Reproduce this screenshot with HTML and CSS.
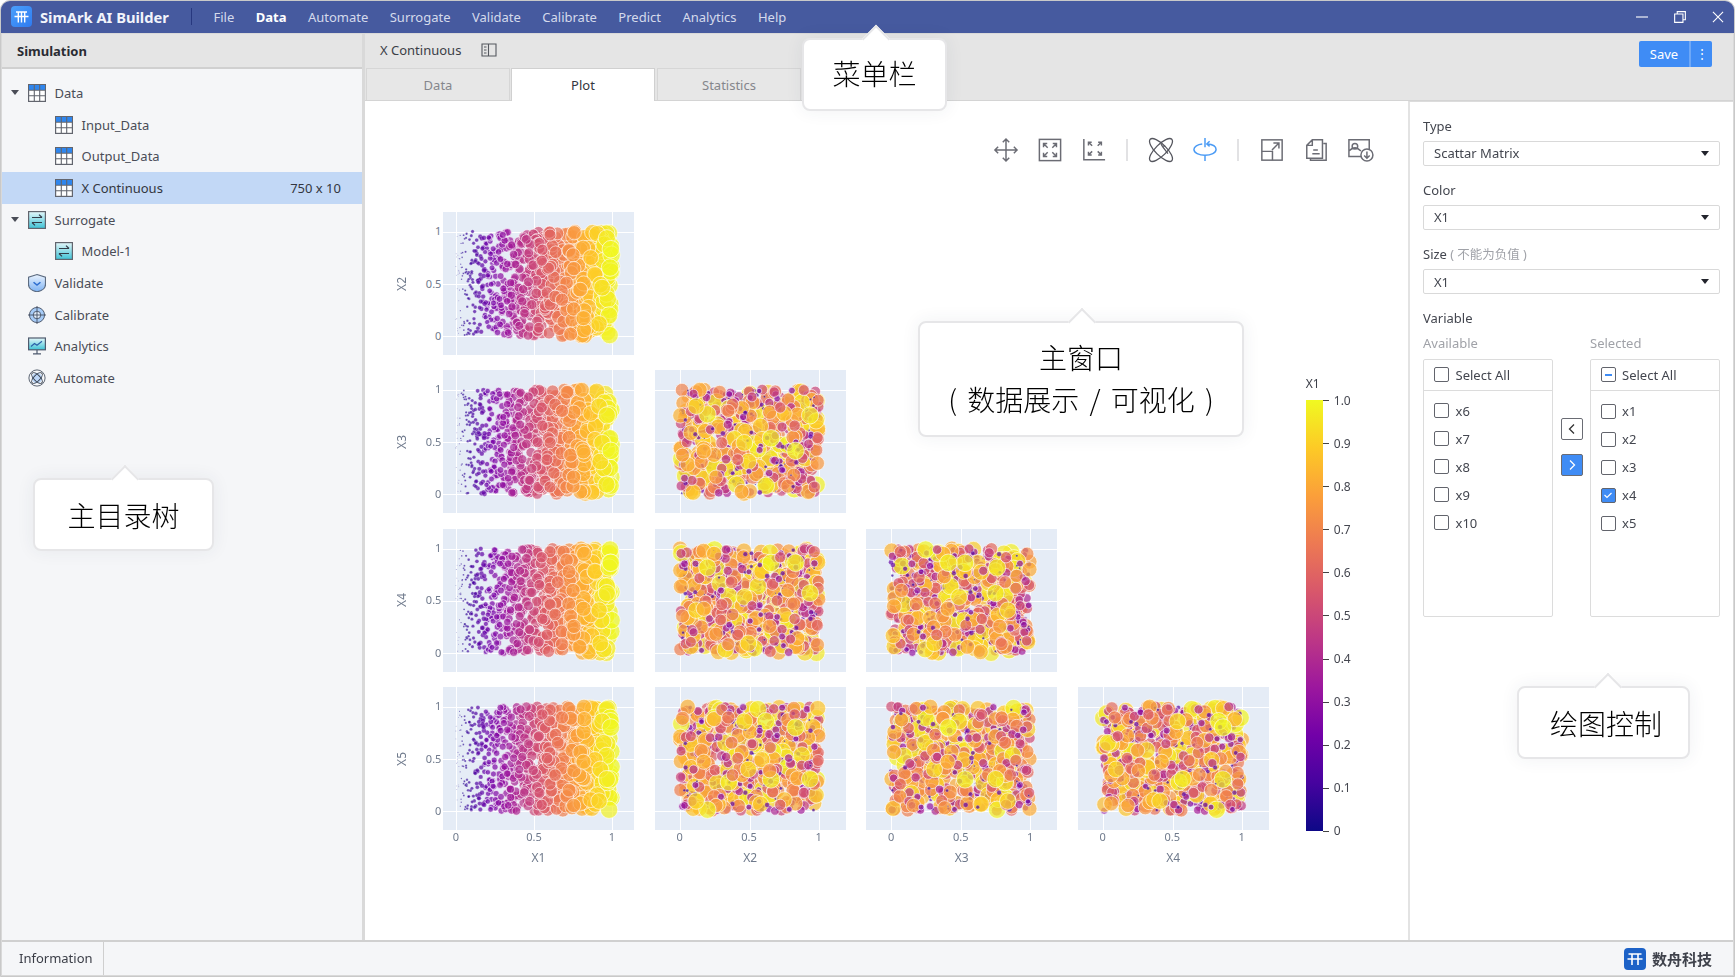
FILE: index.html
```html
<!DOCTYPE html>
<html lang="zh-CN">
<head>
<meta charset="utf-8">
<title>SimArk AI Builder</title>
<link rel="stylesheet" href="styles.css">
</head>
<body>
<svg class="defs" aria-hidden="true">
  <defs>
    <linearGradient id="g-teal" x1="0" y1="0" x2="0" y2="1"><stop offset="0" stop-color="#e4f7fa"/><stop offset="1" stop-color="#3fc3d6"/></linearGradient>
    <linearGradient id="g-blue" x1="0" y1="0" x2="0" y2="1"><stop offset="0" stop-color="#eaf3fe"/><stop offset="1" stop-color="#7db2f3"/></linearGradient>
    <linearGradient id="g-logo" x1="0" y1="0" x2="1" y2="1"><stop offset="0" stop-color="#4aa0fb"/><stop offset="1" stop-color="#2f7bf0"/></linearGradient>
  </defs>
  <symbol id="i-table" viewBox="0 0 18 18">
    <rect x=".6" y=".6" width="16.8" height="16.8" fill="#fff" stroke="#62656e" stroke-width="1.2"/>
    <rect x="1" y="1" width="16" height="5" fill="#2f86ee"/>
    <path d="M6.3 1v16M11.7 1v16M1 6.3h16M1 11.700h16" stroke="#62656e" stroke-width="1.1" fill="none"/>
  </symbol>
  <symbol id="i-surrogate" viewBox="0 0 18 18">
    <rect x=".6" y=".6" width="16.8" height="16.8" fill="url(#g-teal)" stroke="#62656e" stroke-width="1.2"/>
    <path d="M4 6.500h10M11 3.600l3 2.900M14 11.500H4M7 14.400l-3-2.900" stroke="#333b48" stroke-width="1.2" fill="none"/>
  </symbol>
  <symbol id="i-shield" viewBox="1.200 .2 15.600 18" preserveAspectRatio="none">
    <path d="M9 .8l7.400 2.600v7c0 4-3.200 6.800-7.400 7.600-4.200-.8-7.400-3.600-7.400-7.600v-7z" fill="url(#g-blue)" stroke="#5c6b80" stroke-width="1.100"/>
    <path d="M6 8.500l3 2.800 3-2.800" stroke="#2f6fd0" stroke-width="1.300" fill="none"/>
  </symbol>
  <symbol id="i-target" viewBox="0 0 20 20">
    <circle cx="10" cy="10" r="8.400" fill="#a6cbf7" stroke="#4e5a6e" stroke-width="1.100"/>
    <circle cx="10" cy="10" r="4.200" fill="#e7f1fd" stroke="#4e5a6e" stroke-width="1.100"/>
    <path d="M10 0v20M0 10h20" stroke="#4e5a6e" stroke-width="1.100" fill="none"/>
  </symbol>
  <symbol id="i-chart" viewBox="0 0 18 18">
    <rect x=".6" y="1" width="16.800" height="11.800" fill="url(#g-teal)" stroke="#4e5a6e" stroke-width="1.200"/>
    <path d="M3 9.500l3.500-3 2.500 1.800 5-4" stroke="#2b5fa8" stroke-width="1.100" fill="none"/>
    <path d="M9 13v3.500M5 16.800h8" stroke="#4e5a6e" stroke-width="1.200" fill="none"/>
  </symbol>
  <symbol id="i-atom" viewBox="0 0 20 20">
    <circle cx="10" cy="10" r="9" fill="#f5f6f8" stroke="#5b6472" stroke-width="1.100"/>
    <circle cx="10" cy="10" r="5.800" fill="#bcd6f8"/>
    <ellipse cx="10" cy="10" rx="7.600" ry="3.400" transform="rotate(45 10 10)" fill="none" stroke="#3c4654" stroke-width="1.100"/>
    <ellipse cx="10" cy="10" rx="7.600" ry="3.400" transform="rotate(-45 10 10)" fill="none" stroke="#3c4654" stroke-width="1.100"/>
  </symbol>
</svg>

<div class="window">
  <header class="titlebar">
    <svg class="app-logo" viewBox="0 0 21 21">
      <rect width="21" height="21" rx="4" fill="url(#g-logo)"/>
      <path d="M5 6h11M3.500 10.500h14M7.300 6v10.500M10.500 6v10.500M13.700 6v10.500" stroke="#fff" stroke-width="1.400" fill="none"/>
    </svg>
    <span class="app-name">SimArk AI Builder</span>
    <span class="title-sep"></span>
    <nav class="menu">
      <span class="menu-item">File</span>
      <span class="menu-item is-active">Data</span>
      <span class="menu-item">Automate</span>
      <span class="menu-item">Surrogate</span>
      <span class="menu-item">Validate</span>
      <span class="menu-item">Calibrate</span>
      <span class="menu-item">Predict</span>
      <span class="menu-item">Analytics</span>
      <span class="menu-item">Help</span>
    </nav>
    <div class="win-controls">
      <svg class="win-icon" viewBox="0 0 13 13"><path d="M0 6.500h13" stroke="#fff" stroke-width="1.200"/></svg>
      <svg class="win-icon" viewBox="0 0 13 13"><path d="M3.500 3V.7h8.800v8.800H10M.7 3.300h9v9h-9z" stroke="#fff" stroke-width="1.200" fill="none"/></svg>
      <svg class="win-icon" viewBox="0 0 13 13"><path d="M1 1l11 11M12 1L1 12" stroke="#fff" stroke-width="1.200"/></svg>
    </div>
  </header>

  <div class="body">
    <aside class="sidebar">
      <div class="side-head">Simulation</div>
      <ul class="tree">
        <li class="node"><span class="caret"></span><svg class="node-icon"><use href="#i-table"/></svg><span>Data</span></li>
        <li class="node node-child"><svg class="node-icon"><use href="#i-table"/></svg><span>Input_Data</span></li>
        <li class="node node-child"><svg class="node-icon"><use href="#i-table"/></svg><span>Output_Data</span></li>
        <li class="node node-child is-selected"><svg class="node-icon"><use href="#i-table"/></svg><span>X Continuous</span><span class="node-meta">750 x 10</span></li>
        <li class="node"><span class="caret"></span><svg class="node-icon"><use href="#i-surrogate"/></svg><span>Surrogate</span></li>
        <li class="node node-child"><svg class="node-icon"><use href="#i-surrogate"/></svg><span>Model-1</span></li>
        <li class="node node-plain"><svg class="node-icon"><use href="#i-shield"/></svg><span>Validate</span></li>
        <li class="node node-plain"><svg class="node-icon"><use href="#i-target"/></svg><span>Calibrate</span></li>
        <li class="node node-plain"><svg class="node-icon"><use href="#i-chart"/></svg><span>Analytics</span></li>
        <li class="node node-plain"><svg class="node-icon"><use href="#i-atom"/></svg><span>Automate</span></li>
      </ul>
    </aside>

    <main class="main">
      <div class="doc-head">
        <span class="doc-name">X Continuous</span>
        <svg class="book" viewBox="0 0 16 14"><path d="M1 1h6.500v12H1zM7.500 1H15v12H7.500M3 4h2.500M3 7h2.500M3 10h2.500" stroke="#55585f" stroke-width="1.100" fill="none"/></svg>
        <div class="save">
          <span class="save-main">Save</span>
          <span class="save-more">⋮</span>
        </div>
      </div>
      <div class="tabs">
        <span class="tab">Data</span>
        <span class="tab is-active">Plot</span>
        <span class="tab">Statistics</span>
      </div>

      <div class="workspace">
        <section class="plot-area">
          <div class="toolbar">
            <svg class="tool" viewBox="0 0 26 26"><path d="M13 1v24M1 13h24M9.500 4.500L13 1l3.500 3.500M9.500 21.500L13 25l3.500-3.500M4.500 9.500L1 13l3.500 3.500M21.500 9.500L25 13l-3.500 3.500"/></svg>
            <svg class="tool" viewBox="0 0 26 26"><rect x="1.500" y="1.500" width="23" height="23"/><path d="M6 10V6h4M6 6l4.500 4.500M20 10V6h-4M20 6l-4.500 4.500M6 16v4h4M6 20l4.500-4.500M20 16v4h-4M20 20l-4.500-4.500"/></svg>
            <svg class="tool" viewBox="0 0 26 26"><path d="M2 1v22.500h23"/><path d="M7 8V4.500h3.500M7 4.500l4 4M21 8V4.500h-3.500M21 4.500l-4 4M7 15v3.500h3.500M7 18.500l4-4M21 15v3.500h-3.500M21 18.500l-4-4"/></svg>
            <span class="tool-sep"></span>
            <svg class="tool tool-dark" viewBox="0 0 26 26"><ellipse cx="13" cy="13" rx="16.500" ry="6" transform="rotate(45 13 13)"/><ellipse cx="13" cy="13" rx="16.500" ry="6" transform="rotate(-45 13 13)"/><path d="M13 6.500l1.500 2.500 3-.5M14.500 9l6 8"/></svg>
            <svg class="tool tool-blue" viewBox="0 0 26 26"><path d="M13 0v10M13 19v6"/><path d="M15 6.500c6 .3 10 2.700 10 6 0 3.500-5.400 6.300-12 6.300S1 16 1 12.500C1 9.500 5 7 10 6.500"/><path d="M18 3.500l-3 3 3 2.500"/></svg>
            <span class="tool-sep"></span>
            <svg class="tool" viewBox="0 0 26 26"><rect x="2" y="2" width="22" height="22"/><path d="M2 14.500h11.500V24M13 13L20.500 5.500M14.500 5.500h6v6"/></svg>
            <svg class="tool" viewBox="0 0 26 26"><path d="M9 2h11v20H3V8zM9 2v6H3M21 6h3v18H7v-2M10 13h5M9 17h8"/></svg>
            <svg class="tool tool-wide" viewBox="0 0 28 26"><path d="M16 20H2V2h22v12M2 14c5-5 9-4 13 0"/><circle cx="8.500" cy="9" r="3"/><circle cx="21.500" cy="18.500" r="6.500" fill="#fff"/><path d="M21.500 14.500v7M18.500 19l3 3 3-3"/></svg>
          </div>

          <div class="chart">
            <div class="matrix">
              <div class="yaxis"><span class="ytitle">X2</span><div class="yticks"><span>1</span><span>0.5</span><span>0</span></div></div>
              <canvas class="panel" width="191" height="143" data-col="0" data-row="1"></canvas>
              <div></div><div></div><div></div>

              <div class="yaxis"><span class="ytitle">X3</span><div class="yticks"><span>1</span><span>0.5</span><span>0</span></div></div>
              <canvas class="panel" width="191" height="143" data-col="0" data-row="2"></canvas>
              <canvas class="panel" width="191" height="143" data-col="1" data-row="2"></canvas>
              <div></div><div></div>

              <div class="yaxis"><span class="ytitle">X4</span><div class="yticks"><span>1</span><span>0.5</span><span>0</span></div></div>
              <canvas class="panel" width="191" height="143" data-col="0" data-row="3"></canvas>
              <canvas class="panel" width="191" height="143" data-col="1" data-row="3"></canvas>
              <canvas class="panel" width="191" height="143" data-col="2" data-row="3"></canvas>
              <div></div>

              <div class="yaxis"><span class="ytitle">X5</span><div class="yticks"><span>1</span><span>0.5</span><span>0</span></div></div>
              <canvas class="panel" width="191" height="143" data-col="0" data-row="4"></canvas>
              <canvas class="panel" width="191" height="143" data-col="1" data-row="4"></canvas>
              <canvas class="panel" width="191" height="143" data-col="2" data-row="4"></canvas>
              <canvas class="panel" width="191" height="143" data-col="3" data-row="4"></canvas>

              <div class="xgutter"></div>
              <div class="xaxis xaxis-first"><div class="xticks"><span>0</span><span>0.5</span><span>1</span></div><span class="xtitle">X1</span></div>
              <div class="xaxis"><div class="xticks"><span>0</span><span>0.5</span><span>1</span></div><span class="xtitle">X2</span></div>
              <div class="xaxis"><div class="xticks"><span>0</span><span>0.5</span><span>1</span></div><span class="xtitle">X3</span></div>
              <div class="xaxis"><div class="xticks"><span>0</span><span>0.5</span><span>1</span></div><span class="xtitle">X4</span></div>
            </div>

            <div class="colorbar">
              <span class="cb-title">X1</span>
              <div class="cb-body">
                <div class="cb-bar"></div>
                <div class="cb-ticks">
                  <span class="cb-tick">1.0</span><span class="cb-tick">0.9</span><span class="cb-tick">0.8</span><span class="cb-tick">0.7</span><span class="cb-tick">0.6</span><span class="cb-tick">0.5</span><span class="cb-tick">0.4</span><span class="cb-tick">0.3</span><span class="cb-tick">0.2</span><span class="cb-tick">0.1</span><span class="cb-tick">0</span>
                </div>
              </div>
            </div>
          </div>
        </section>

        <aside class="controls">
          <div class="field">
            <label class="field-label">Type</label>
            <div class="select"><span>Scattar Matrix</span><i class="select-arrow"></i></div>
          </div>
          <div class="field">
            <label class="field-label">Color</label>
            <div class="select"><span>X1</span><i class="select-arrow"></i></div>
          </div>
          <div class="field field-last">
            <label class="field-label">Size <span class="field-note">( 不能为负值 )</span></label>
            <div class="select"><span>X1</span><i class="select-arrow"></i></div>
          </div>
          <div class="field-label">Variable</div>
          <div class="transfer">
            <div class="transfer-col">
              <div class="field-label field-label-muted">Available</div>
              <div class="list">
                <div class="list-head"><span class="check"></span>Select All</div>
                <div class="list-body">
                  <div class="list-item"><span class="check"></span>x6</div>
                  <div class="list-item"><span class="check"></span>x7</div>
                  <div class="list-item"><span class="check"></span>x8</div>
                  <div class="list-item"><span class="check"></span>x9</div>
                  <div class="list-item"><span class="check"></span>x10</div>
                </div>
              </div>
            </div>
            <div class="transfer-btns">
              <span class="move"><svg viewBox="0 0 12 12"><path d="M8 1.500L3.500 6 8 10.500" fill="none" stroke="#333" stroke-width="1.300"/></svg></span>
              <span class="move is-on"><svg viewBox="0 0 12 12"><path d="M4 1.500L8.500 6 4 10.500" fill="none" stroke="#fff" stroke-width="1.300"/></svg></span>
            </div>
            <div class="transfer-col">
              <div class="field-label field-label-muted">Selected</div>
              <div class="list list-sel">
                <div class="list-head"><span class="check is-mixed"></span>Select All</div>
                <div class="list-body list-body-sel">
                  <div class="list-item"><span class="check"></span>x1</div>
                  <div class="list-item"><span class="check"></span>x2</div>
                  <div class="list-item"><span class="check"></span>x3</div>
                  <div class="list-item"><span class="check is-on"><svg viewBox="0 0 12 12"><path d="M2.500 6l2.500 2.500 4.500-4.500" fill="none" stroke="#fff" stroke-width="1.200"/></svg></span>x4</div>
                  <div class="list-item"><span class="check"></span>x5</div>
                </div>
              </div>
            </div>
          </div>
        </aside>
      </div>
    </main>
  </div>

  <footer class="status">
    <span class="status-tab">Information</span>
    <div class="brand">
      <svg class="brand-logo" viewBox="0 0 22 22">
        <rect width="22" height="22" rx="4" fill="#1d62c7"/>
        <path d="M4.500 6h13M3.500 11h15M8 6v11M14 6v11" stroke="#fff" stroke-width="1.600" fill="none"/>
      </svg>
      <span class="brand-name">数舟科技</span>
    </div>
  </footer>

  <div class="callout callout-menu">菜单栏</div>
  <div class="callout callout-tree">主目录树</div>
  <div class="callout callout-main">主窗口<br>( 数据展示 / 可视化 )</div>
  <div class="callout callout-ctrl">绘图控制</div>
</div>
<script src="script.js"></script>
</body>
</html>
```

FILE: styles.css
```css
* { box-sizing: border-box; }
html, body { margin: 0; padding: 0; }
body {
  width: 1736px;
  height: 978px;
  overflow: hidden;
  background: #fff;
  font: 13px/18px "Noto Sans", "Noto Sans CJK SC", sans-serif;
  color: #43464f;
}
.defs { position: absolute; width: 0; height: 0; }

.window {
  position: relative;
  width: 1735px;
  height: 977px;
  display: flex;
  flex-direction: column;
  border: 1px solid #c9c9c9;
  border-radius: 10px 10px 0 0;
  background: #d9d9d9;
}

/* Title bar */
.titlebar {
  flex: none;
  height: 32px;
  display: flex;
  align-items: center;
  padding: 0 10px 1px 10px;
  background: #465a9f;
  border-radius: 9px 9px 0 0;
  color: #dfe4f3;
}
.app-logo { width: 21px; height: 21px; margin-right: 8px; flex: none; }
.app-name { font-size: 14.700px; font-weight: 700; color: #f2f4fb; white-space: nowrap; width: 130px; }
.title-sep { width: 1px; height: 17px; margin: 0 21.500px 0 21px; background: #27387f; }
.menu { display: flex; gap: 21.450px; }
.menu-item { white-space: nowrap; color: #d5daec; }
.menu-item.is-active { color: #fff; font-weight: 700; }
.win-controls { margin-left: auto; display: flex; gap: 26px; align-items: center; }
.win-icon { width: 12px; height: 12px; display: block; }

/* Body */
.body {
  flex: 1;
  min-height: 0;
  display: flex;
  gap: 3px;
  padding: 1px 1px 0 1px;
}

.sidebar {
  flex: none;
  width: 360px;
  display: flex;
  flex-direction: column;
}
.side-head {
  flex: none;
  height: 35px;
  padding: 8px 0 0 15px;
  background: #e5e5e5;
  border-bottom: 2px solid #d0d0d0;
  font-weight: 700;
  color: #2a2c33;
}
.tree {
  flex: 1;
  margin: 0;
  padding: 8px 0 0 0;
  list-style: none;
  background: #f5f6f8;
}
.node {
  display: flex;
  align-items: center;
  height: 31.700px;
  padding-left: 9px;
  color: #4a4d57;
}
.caret {
  width: 0;
  height: 0;
  margin-right: 9px;
  border-left: 4px solid transparent;
  border-right: 4px solid transparent;
  border-top: 5px solid #4a4d57;
}
.node-icon { flex: none; width: 18px; height: 18px; margin-right: 8.500px; overflow: visible; }
.node-child { padding-left: 53px; }
.node-plain { padding-left: 26px; }
.node.is-selected { background: #c2d8f6; color: #333640; }
.node-meta { margin-left: auto; padding-right: 21px; }

/* Main */
.main { flex: 1; min-width: 0; display: flex; flex-direction: column; }
.doc-head {
  flex: none;
  height: 34px;
  display: flex;
  align-items: flex-start;
  padding: 7px 21px 0 15px;
  background: #e5e5e5;
  color: #3b3e47;
}
.doc-name { white-space: nowrap; }
.book { width: 16px; height: 14px; margin: 2px 0 0 20px; flex: none; }
.save {
  margin-left: auto;
  display: flex;
  height: 26px;
  border-radius: 2px;
  overflow: hidden;
  color: #fff;
  background: #3f8cf5;
}
.save-main { width: 50px; text-align: center; line-height: 26px; }
.save-more { width: 23px; text-align: center; line-height: 26px; border-left: 2px solid #6ea8f7; font-size: 12px; }

.tabs {
  flex: none;
  height: 33px;
  display: flex;
  gap: 1px;
  padding-left: 1px;
  background: #e5e5e5;
  border-bottom: 1px solid #d4d4d4;
}
.tab {
  width: 144px;
  height: 32px;
  text-align: center;
  line-height: 33px;
  color: #85868c;
  background: #e7e7e7;
  border: 1px solid #d6d6d6;
  border-bottom-width: 0;
}
.tab:last-child { margin-left: 1px; }
.tab.is-active { height: 33px; background: #fff; color: #33363f; border-color: #d0d0d0; border-bottom: 0; }

.workspace { flex: 1; min-height: 0; display: flex; background: #fff; }
.plot-area { flex: 1; min-width: 0; display: flex; flex-direction: column; padding: 37px 35px 0 27.400px; }

.toolbar { flex: none; height: 24px; display: flex; align-items: center; justify-content: flex-end; gap: 18px; }
.tool {
  flex: none;
  width: 24px;
  height: 24px;
  margin: 0 1px;
  fill: none;
  stroke: #6b6c74;
  stroke-width: 1.600;
  overflow: visible;
}
.tool-dark { stroke: #55565e; stroke-width: 1.400; }
.tool-blue { stroke: #4b9bf5; }
.tool-wide { width: 26px; margin: 0; }
.tool-sep { width: 2px; height: 22px; background: #e2e2e4; margin: 0 2px 0 1px; }

.chart { display: flex; margin-top: 50px; align-items: flex-start; }
.matrix {
  flex: none;
  display: grid;
  grid-template-columns: 30px repeat(4, 191px);
  grid-auto-rows: 143px;
  column-gap: 20.600px;
  row-gap: 15.400px;
}
.panel { display: block; width: 191px; height: 143px; }

.yaxis { display: flex; align-items: center; margin-right: -20px; color: #6f7a8c; font-size: 11px; line-height: 14px; }
.ytitle {
  flex: none;
  width: 16px;
  margin-left: 3px;
  font-size: 12px;
  text-align: center;
  writing-mode: vertical-rl;
  transform: rotate(180deg);
}
.yticks {
  flex: 1;
  height: 143px;
  display: flex;
  flex-direction: column;
  justify-content: space-between;
  align-items: flex-end;
  padding: 12px 1px 12px 0;
}

.xgutter, .xaxis { margin-top: -15.500px; }
.xaxis { color: #6f7a8c; font-size: 11px; line-height: 14px; text-align: center; }
.xticks { display: flex; justify-content: space-between; padding: 0 17px 0 15px; }
.xaxis-first .xticks { padding: 0 12px 0 3px; }
.xticks span { width: 20px; text-align: center; }
.xtitle { display: block; margin-top: 6px; font-size: 12px; line-height: 16px; }

.colorbar { margin: 163px 0 0 37px; display: flex; flex-direction: column; }
.cb-title { height: 25px; font-size: 12px; line-height: 18px; color: #3c3f48; }
.cb-body { display: flex; height: 431px; }
.cb-bar {
  width: 17px;
  background: linear-gradient(to top, #0d0887, #46039f, #7201a8, #9c179e, #bd3786, #d8576b, #ed7953, #fb9f3a, #fdca26, #f0f921);
}
.cb-ticks {
  display: flex;
  flex-direction: column;
  justify-content: space-between;
  height: 445px;
  margin-top: -6.500px;
}
.cb-tick { display: flex; align-items: center; height: 14px; font-size: 12px; line-height: 14px; color: #44464f; }
.cb-tick::before { content: ""; width: 6px; height: 1px; margin-right: 5px; background: #444; }

/* Controls */
.controls {
  flex: none;
  width: 325px;
  padding: 13.500px 13px 0 13px;
  border-left: 2px solid #e3e3e3;
  border-top: 1px solid #dcdcdc;
}
.field { margin-bottom: 14.400px; }
.field-last { margin-bottom: 13.400px; }
.field-label { display: block; height: 20px; line-height: 20px; color: #43464f; }
.field-label-muted { color: #a0a2a8; }
.field-note { color: #a0a2a8; font-size: 12.500px; }
.select {
  display: flex;
  align-items: center;
  justify-content: space-between;
  height: 25px;
  margin-top: 5px;
  padding: 0 10px;
  border: 1px solid #d9d9d9;
  border-radius: 2px;
  color: #43464f;
}
.select-arrow {
  width: 0;
  height: 0;
  border-left: 4px solid transparent;
  border-right: 4px solid transparent;
  border-top: 5px solid #22242c;
}
.transfer {
  display: grid;
  grid-template-columns: 130px 37px 130px;
  margin-top: 5px;
}
.list {
  height: 258px;
  margin-top: 6px;
  border: 1px solid #dcdcdc;
  border-radius: 2px;
}
.list-head {
  display: flex;
  align-items: center;
  gap: 6.500px;
  height: 31px;
  padding-left: 10px;
  border-bottom: 1px solid #dcdcdc;
}
.list-body { padding-top: 6px; }
.list-body-sel { padding-top: 6.500px; }
.list-item { display: flex; align-items: center; gap: 6.500px; height: 28px; padding-left: 10px; }
.list-sel .list-head, .list-sel .list-item { padding-left: 9.500px; }
.check {
  flex: none;
  display: flex;
  align-items: center;
  justify-content: center;
  width: 15px;
  height: 15px;
  border: 1.500px solid #62646c;
  border-radius: 2px;
  background: #fff;
}
.check svg { width: 12px; height: 12px; }
.check.is-on { background: #3f8cf5; }
.check.is-mixed::before { content: ""; width: 7px; height: 2px; background: #3f8cf5; }

.transfer-btns {
  display: flex;
  flex-direction: column;
  align-items: center;
  gap: 14px;
  padding-top: 85px;
}
.move {
  display: flex;
  align-items: center;
  justify-content: center;
  width: 22px;
  height: 22px;
  border: 1px solid #6a6c74;
  border-radius: 2px;
  background: #fff;
}
.move svg { width: 12px; height: 12px; }
.move.is-on { background: #3f8cf5; }

/* Status bar */
.status {
  flex: none;
  height: 35px;
  display: flex;
  align-items: stretch;
  margin: 0 1px 1px;
  background: #f5f6f8;
  border-top: 2px solid #d0d0d0;
}
.status-tab {
  width: 102px;
  padding-left: 17px;
  line-height: 33px;
  border-right: 1px solid #cfcfcf;
  color: #3b3e47;
}
.brand { margin-left: auto; display: flex; align-items: center; gap: 6px; padding-right: 21px; }
.brand-logo { width: 22px; height: 22px; margin-left: -1px; }
.brand-name { font-size: 15px; font-weight: 700; color: #3f424b; }

/* Callouts */
.callout {
  position: absolute;
  display: flex;
  align-items: center;
  justify-content: center;
  text-align: center;
  background: #fff;
  border: 2px solid #e6e6e8;
  border-radius: 8px;
  box-shadow: 0 0 18px rgba(40, 50, 80, .07);
  color: #000;
  font: 300 28px/42px "Noto Sans CJK SC", "Noto Sans", sans-serif;
}
.callout::before {
  content: "";
  position: absolute;
  top: -11px;
  left: 50%;
  width: 18px;
  height: 18px;
  margin-left: -9px;
  background: #fff;
  border-top: 2px solid #e6e6e8;
  border-left: 2px solid #e6e6e8;
  transform: rotate(45deg);
}
.callout-menu { left: 801px; top: 37px; width: 145px; height: 73px; padding-bottom: 3px; }
.callout-tree { left: 32px; top: 477px; width: 181px; height: 73px; }
.callout-main { left: 917px; top: 320px; width: 326px; height: 116px; padding-bottom: 3px; word-spacing: 4px; }
.callout-ctrl { left: 1516px; top: 685px; width: 173px; height: 73px; padding-left: 5px; }
.callout-ctrl::before { margin-left: -6px; }
```

FILE: script.js
```javascript
(function () {
  var seed = 20240611;
  function rnd() {
    seed = (seed + 0x6d2b79f5) | 0;
    var t = Math.imul(seed ^ (seed >>> 15), 1 | seed);
    t = (t + Math.imul(t ^ (t >>> 7), 61 | t)) ^ t;
    return ((t ^ (t >>> 14)) >>> 0) / 4294967296;
  }
  var N = 750;
  var vars = [];
  for (var v = 0; v < 5; v++) {
    var arr = [];
    for (var i = 0; i < N; i++) arr.push((i + rnd()) / N);
    for (var j = N - 1; j > 0; j--) {
      var k = Math.floor(rnd() * (j + 1));
      var tmp = arr[j]; arr[j] = arr[k]; arr[k] = tmp;
    }
    vars.push(arr);
  }
  var stops = [[13,8,135],[70,3,159],[114,1,168],[156,23,158],[189,55,134],[216,87,107],[237,121,83],[251,159,58],[253,202,38],[240,249,33]];
  function plasma(t) {
    var p = Math.min(t, 0.9999) * (stops.length - 1);
    var a = Math.floor(p), f = p - a, s = stops[a], e = stops[a + 1];
    return "rgb(" + Math.round(s[0] + (e[0] - s[0]) * f) + "," + Math.round(s[1] + (e[1] - s[1]) * f) + "," + Math.round(s[2] + (e[2] - s[2]) * f) + ")";
  }
  document.querySelectorAll("canvas.panel").forEach(function (c) {
    var col = +c.dataset.col, row = +c.dataset.row;
    var g = c.getContext("2d");
    var x0 = col === 0 ? 12.7 : 25, x1 = col === 0 ? 168.7 : 164;
    var y0 = 124, y1 = 19.5;
    g.fillStyle = "#e5ecf6";
    g.fillRect(0, 0, c.width, c.height);
    g.strokeStyle = "#fff";
    g.lineWidth = 1;
    [0, 0.5, 1].forEach(function (t) {
      var x = Math.round(x0 + (x1 - x0) * t) + 0.5;
      var y = Math.round(y0 + (y1 - y0) * t) + 0.5;
      g.beginPath(); g.moveTo(x, 0); g.lineTo(x, c.height); g.stroke();
      g.beginPath(); g.moveTo(0, y); g.lineTo(c.width, y); g.stroke();
    });
    g.globalAlpha = 0.7;
    for (var n = 0; n < N; n++) {
      var size = vars[0][n];
      var cx = x0 + (x1 - x0) * vars[col][n];
      var cy = y0 + (y1 - y0) * vars[row][n];
      var r = Math.max(0.4, 8.8 * Math.pow(size, 0.75));
      g.lineWidth = r > 2.5 ? 0.9 : 0.3;
      g.beginPath();
      g.arc(cx, cy, r, 0, Math.PI * 2);
      g.fillStyle = plasma(size);
      g.fill();
      g.stroke();
    }
  });
})();
```
